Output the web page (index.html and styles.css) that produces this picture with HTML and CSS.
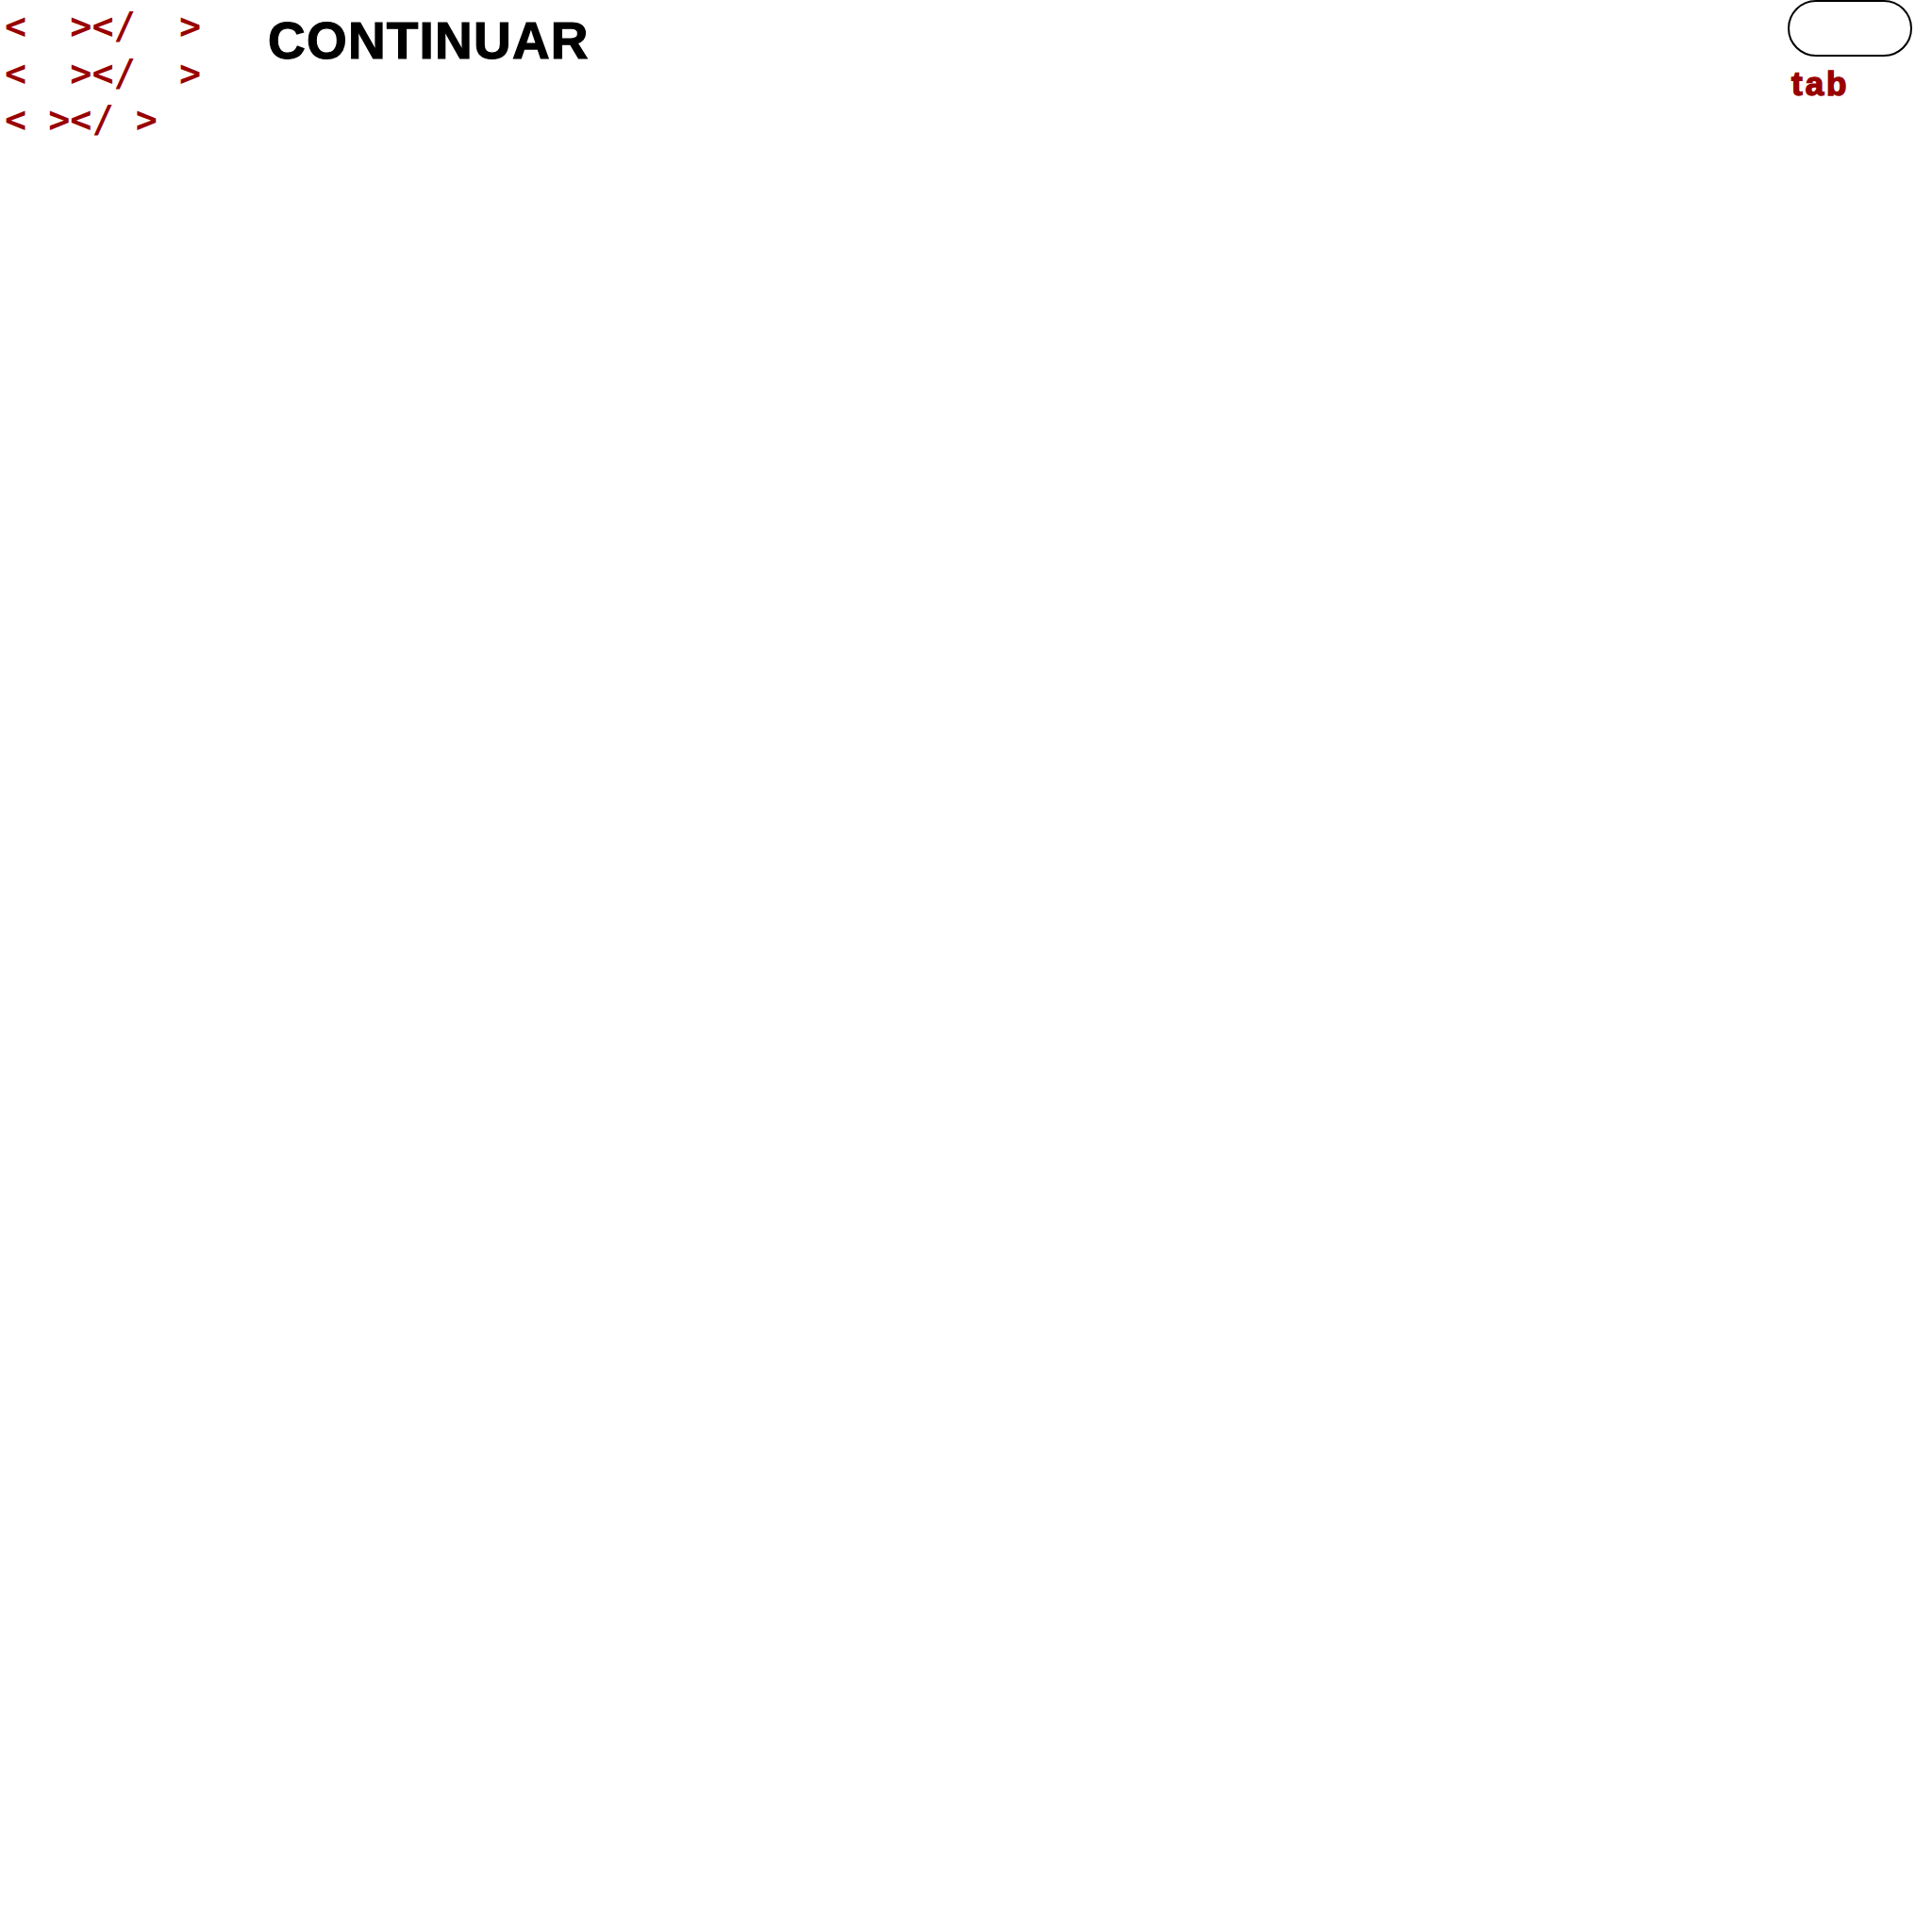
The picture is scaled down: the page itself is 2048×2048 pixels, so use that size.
FILE: index.html
```html
<!DOCTYPE html>
<html lang="es">
<head>
<meta charset="utf-8">
<title>Continuar</title>
<link rel="stylesheet" href="styles.css">
</head>
<body>
<div class="page">
  <div class="tags">
    <div class="tag">&lt;<span class="hid">h1</span>&gt;&lt;/<span class="hid">h1</span>&gt;</div>
    <div class="tag">&lt;<span class="hid">h2</span>&gt;&lt;/<span class="hid">h2</span>&gt;</div>
    <div class="tag">&lt;<span class="hid">p</span>&gt;&lt;/<span class="hid">p</span>&gt;</div>
  </div>
  <h1 class="title">CONTINUAR</h1>
  <div class="side">
    <button class="pill" type="button"></button>
    <div class="tab">tab</div>
  </div>
</div>
</body>
</html>
```

FILE: styles.css
```css
html, body {
  margin: 0;
  padding: 0;
  background: #ffffff;
}

.page {
  display: flex;
  align-items: flex-start;
  padding: 0 21px 0 5px;
}

.tags {
  display: flex;
  flex-direction: column;
  width: 279px;
  padding-top: 3px;
}

.tag {
  font-family: "DejaVu Sans Mono", monospace;
  font-weight: bold;
  font-size: 38.4px;
  line-height: 49.5px;
  height: 49.5px;
  color: #990000;
  white-space: pre;
}

.hid {
  visibility: hidden;
}

.title {
  margin: 0;
  padding-top: 11px;
  font-family: "Liberation Sans", Arial, sans-serif;
  font-weight: bold;
  font-size: 55px;
  line-height: 64px;
  letter-spacing: 1.2px;
  color: #000000;
  -webkit-text-stroke: 1.2px #000000;
  flex: 1;
}

.side {
  display: flex;
  flex-direction: column;
  align-items: flex-start;
}

.pill {
  width: 132px;
  height: 60px;
  border: 2px solid #000000;
  border-radius: 30px;
  background: #ffffff;
  padding: 0;
  margin: 0;
}

.tab {
  margin-top: 9px;
  padding-left: 4px;
  font-family: "Liberation Sans", Arial, sans-serif;
  font-weight: bold;
  font-size: 35px;
  line-height: 40px;
  letter-spacing: 3px;
  color: #990000;
  -webkit-text-stroke: 1.5px #990000;
}
```
